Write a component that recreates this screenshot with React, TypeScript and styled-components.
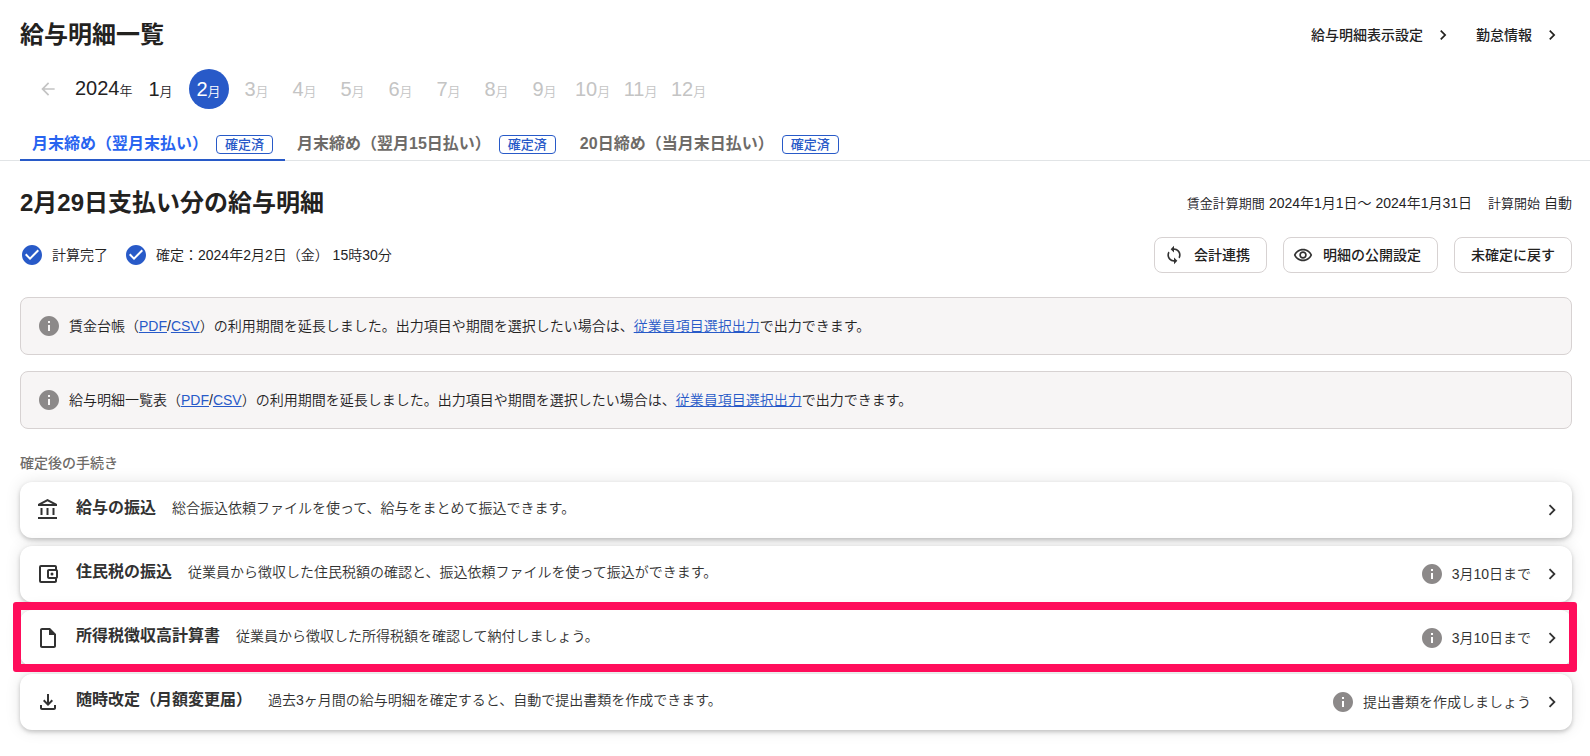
import React from "react";
import styled, { createGlobalStyle, css } from "styled-components";
import {
  MdArrowBack,
  MdCheckCircle,
  MdChevronRight,
  MdInfo,
  MdOutlineAccountBalance,
  MdOutlineAccountBalanceWallet,
  MdOutlineFileDownload,
  MdOutlineInsertDriveFile,
  MdOutlineRemoveRedEye,
  MdSync,
} from "react-icons/md";

const color = {
  text: "#23221f",
  icon: "#323232",
  sub: "#6e6b68",
  disabled: "#c4c4c4",
  primary: "#285ac8",
  active: "#2864f0",
  border: "#d7d2d2",
  notice: "#f7f5f5",
  info: "#8c8989",
  highlight: "#ff0d5b",
};

const GlobalStyle = createGlobalStyle`
  * { box-sizing: border-box; }
  body {
    margin: 0;
    background: #fff;
    color: ${color.text};
    font-family: "Liberation Sans", "Noto Sans CJK JP", sans-serif;
    font-size: 14px;
    line-height: 20px;
    font-weight: 350;
  }
  button {
    font: inherit;
    color: inherit;
    cursor: pointer;
  }
  svg { flex: none; display: block; }
`;

const Page = styled.div`
  padding: 16px 0 24px;
`;

const Inset = styled.div`
  padding: 0 18px 0 20px;
`;

const Header = styled.header`
  display: flex;
  align-items: center;
  justify-content: space-between;
  min-height: 37px;
`;

const Heading = styled.h1`
  margin: 0;
  font-size: 24px;
  line-height: 36px;
  font-weight: 700;
`;

const HeaderNav = styled.nav`
  display: flex;
  gap: 23px;
  padding-right: 10px;
`;

const HeaderLink = styled.a`
  display: flex;
  align-items: center;
  gap: 10px;
  color: ${color.text};
  font-weight: 500;
  text-decoration: none;
`;

const MonthNav = styled.nav`
  display: flex;
  align-items: center;
  gap: 8px;
  margin-top: 16px;
  padding-left: 18px;
`;

const BackButton = styled.button`
  display: flex;
  padding: 0;
  margin-right: 9px;
  border: 0;
  background: none;
  color: ${color.disabled};
`;

const monthText = css`
  font-size: 20px;
  line-height: 24px;
  small {
    font-size: 13px;
  }
`;

const Year = styled.span`
  ${monthText}
`;

const MonthButton = styled.button<{ $selected: boolean }>`
  display: flex;
  align-items: baseline;
  justify-content: center;
  width: 40px;
  height: 40px;
  padding: 8px 0;
  border: 0;
  border-radius: 50%;
  background: ${(p) => (p.$selected ? color.primary : "none")};
  color: ${(p) => (p.$selected ? "#fff" : color.text)};
  white-space: nowrap;
  ${monthText}
  &:disabled {
    color: ${color.disabled};
    cursor: default;
  }
`;

const Tabs = styled.div`
  display: flex;
  margin-top: 18px;
  padding: 0 20px;
  box-shadow: inset 0 -1px 0 #e1e4e6;
`;

const Tab = styled.button<{ $active: boolean }>`
  display: flex;
  align-items: center;
  gap: 8px;
  padding: 5px 12px 3px;
  border: 0;
  border-bottom: 2px solid ${(p) => (p.$active ? color.primary : "transparent")};
  background: none;
  color: ${(p) => (p.$active ? color.active : color.sub)};
  font-size: 16px;
  line-height: 24px;
  font-weight: 700;
`;

const Badge = styled.span`
  padding: 0 8px;
  border: 1px solid ${color.primary};
  border-radius: 4px;
  background: #fff;
  color: ${color.primary};
  font-size: 13px;
  line-height: 17px;
  font-weight: 500;
`;

const SummaryRow = styled.div`
  display: flex;
  align-items: center;
  justify-content: space-between;
  gap: 16px;
  min-height: 36px;
  margin-bottom: 16px;
`;

const ActionRow = styled(SummaryRow)`
  margin-bottom: 24px;
`;

const Content = styled(Inset)`
  padding-top: 24px;
`;

const Subheading = styled.h2`
  margin: 0;
  font-size: 24px;
  line-height: 36px;
  font-weight: 700;
`;

const Terms = styled.dl`
  display: flex;
  gap: 16px;
  margin: 0;
  div {
    display: flex;
    align-items: baseline;
    gap: 4px;
  }
  dt {
    font-size: 13px;
  }
  dd {
    margin: 0;
  }
`;

const Group = styled.div`
  display: flex;
  align-items: center;
  gap: 16px;
`;

const Status = styled.span`
  display: flex;
  align-items: center;
  gap: 8px;
  svg {
    color: ${color.primary};
  }
`;

const ActionButton = styled.button<{ $icon?: boolean }>`
  display: flex;
  align-items: center;
  gap: 10px;
  height: 36px;
  padding: 0 16px 0 ${(p) => (p.$icon ? "9px" : "16px")};
  border: 1px solid ${color.border};
  border-radius: 8px;
  background: #fff;
  font-weight: 500;
  svg {
    color: ${color.icon};
  }
`;

const Notice = styled.p`
  display: flex;
  align-items: center;
  gap: 8px;
  margin: 0 0 16px;
  padding: 16px;
  border: 1px solid ${color.border};
  border-radius: 8px;
  background: ${color.notice};
  line-height: 24px;
  svg {
    color: ${color.info};
  }
  a {
    color: ${color.primary};
  }
`;

const SectionTitle = styled.h3`
  margin: 24px 0 9px;
  color: ${color.sub};
  font-size: 14px;
  line-height: 20px;
  font-weight: 500;
`;

const TaskList = styled.ul`
  display: grid;
  gap: 8px;
  margin: 0;
  padding: 0;
  list-style: none;
`;

const TaskItem = styled.li`
  position: relative;
`;

const TaskCard = styled.a`
  display: flex;
  align-items: center;
  height: 56px;
  padding: 0 9px 0 16px;
  border-radius: 12px;
  background: #fff;
  box-shadow: 0 0 16px rgba(0, 0, 0, 0.1), 0 2px 4px rgba(0, 0, 0, 0.2);
  color: ${color.icon};
  text-decoration: none;
`;

const TaskText = styled.span`
  display: flex;
  align-items: baseline;
  gap: 16px;
  flex: 1;
  margin-left: 16px;
  padding-bottom: 4px;
  line-height: 24px;
  strong {
    font-size: 16px;
    font-weight: 700;
  }
`;

const Due = styled.span`
  display: flex;
  align-items: center;
  gap: 8px;
  margin-right: 10px;
  svg {
    color: ${color.info};
  }
`;

const Highlight = styled.span`
  position: absolute;
  inset: -8px -5px -6px -7px;
  border: 8px solid ${color.highlight};
  border-radius: 3px;
  pointer-events: none;
  z-index: 1;
`;

const months = Array.from({ length: 12 }, (_, i) => i + 1);

const tabs = ["月末締め（翌月末払い）", "月末締め（翌月15日払い）", "20日締め（当月末日払い）"];

const tasks = [
  {
    icon: MdOutlineAccountBalance,
    title: "給与の振込",
    text: "総合振込依頼ファイルを使って、給与をまとめて振込できます。",
  },
  {
    icon: MdOutlineAccountBalanceWallet,
    title: "住民税の振込",
    text: "従業員から徴収した住民税額の確認と、振込依頼ファイルを使って振込ができます。",
    due: "3月10日まで",
  },
  {
    icon: MdOutlineInsertDriveFile,
    title: "所得税徴収高計算書",
    text: "従業員から徴収した所得税額を確認して納付しましょう。",
    due: "3月10日まで",
    highlighted: true,
  },
  {
    icon: MdOutlineFileDownload,
    title: "随時改定（月額変更届）",
    text: "過去3ヶ月間の給与明細を確定すると、自動で提出書類を作成できます。",
    due: "提出書類を作成しましょう",
  },
];

function ExtensionNotice({ name }: { name: string }) {
  return (
    <Notice>
      <MdInfo size={24} />
      <span>
        {name}（<a href="#pdf">PDF</a>/<a href="#csv">CSV</a>
        ）の利用期間を延長しました。出力項目や期間を選択したい場合は、
        <a href="#export">従業員項目選択出力</a>で出力できます。
      </span>
    </Notice>
  );
}

export default function App() {
  return (
    <Page>
      <GlobalStyle />
      <Inset>
        <Header>
          <Heading>給与明細一覧</Heading>
          <HeaderNav>
            <HeaderLink href="#display">
              給与明細表示設定
              <MdChevronRight size={20} />
            </HeaderLink>
            <HeaderLink href="#attendance">
              勤怠情報
              <MdChevronRight size={20} />
            </HeaderLink>
          </HeaderNav>
        </Header>
        <MonthNav>
          <BackButton aria-label="前の年">
            <MdArrowBack size={20} />
          </BackButton>
          <Year>
            2024<small>年</small>
          </Year>
          {months.map((m) => (
            <MonthButton key={m} $selected={m === 2} disabled={m > 2}>
              {m}
              <small>月</small>
            </MonthButton>
          ))}
        </MonthNav>
      </Inset>
      <Tabs role="tablist">
        {tabs.map((label, i) => (
          <Tab key={label} role="tab" aria-selected={i === 0} $active={i === 0}>
            {label}
            <Badge>確定済</Badge>
          </Tab>
        ))}
      </Tabs>
      <Content as="main">
        <SummaryRow>
          <Subheading>2月29日支払い分の給与明細</Subheading>
          <Terms>
            <div>
              <dt>賃金計算期間</dt>
              <dd>2024年1月1日～ 2024年1月31日</dd>
            </div>
            <div>
              <dt>計算開始</dt>
              <dd>自動</dd>
            </div>
          </Terms>
        </SummaryRow>
        <ActionRow>
          <Group>
            <Status>
              <MdCheckCircle size={24} />
              計算完了
            </Status>
            <Status>
              <MdCheckCircle size={24} />
              確定：2024年2月2日（金） 15時30分
            </Status>
          </Group>
          <Group>
            <ActionButton $icon>
              <MdSync size={20} />
              会計連携
            </ActionButton>
            <ActionButton $icon>
              <MdOutlineRemoveRedEye size={20} />
              明細の公開設定
            </ActionButton>
            <ActionButton>未確定に戻す</ActionButton>
          </Group>
        </ActionRow>
        <ExtensionNotice name="賃金台帳" />
        <ExtensionNotice name="給与明細一覧表" />
        <SectionTitle>確定後の手続き</SectionTitle>
        <TaskList>
          {tasks.map(({ icon: Icon, title, text, due, highlighted }) => (
            <TaskItem key={title}>
              <TaskCard href="#task">
                <Icon size={24} />
                <TaskText>
                  <strong>{title}</strong>
                  <span>{text}</span>
                </TaskText>
                {due && (
                  <Due>
                    <MdInfo size={24} />
                    {due}
                  </Due>
                )}
                <MdChevronRight size={22} />
              </TaskCard>
              {highlighted && <Highlight />}
            </TaskItem>
          ))}
        </TaskList>
      </Content>
    </Page>
  );
}
